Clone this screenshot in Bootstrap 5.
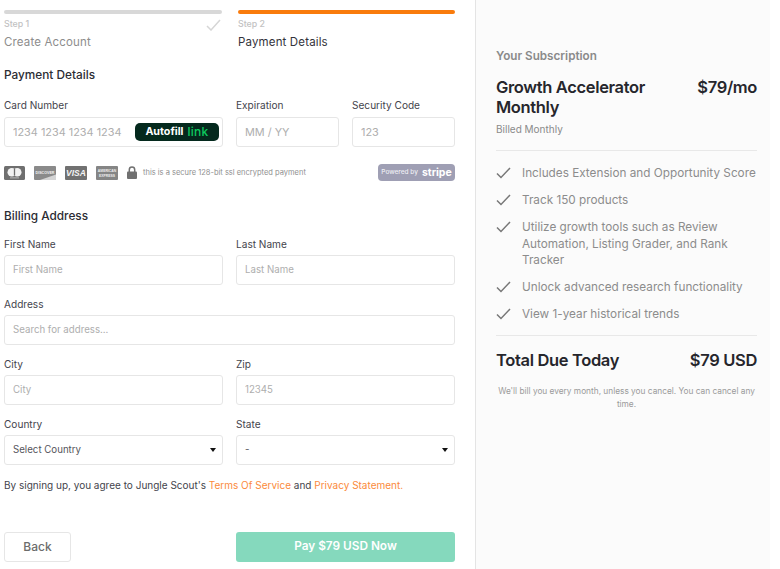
<!doctype html>
<html lang="en"><head><meta charset="utf-8">
<title>Checkout</title>
<link href="https://cdn.jsdelivr.net/npm/bootstrap@5.3.0/dist/css/bootstrap.min.css" rel="stylesheet">
<style>
html,body{height:100%;margin:0;background:#fff}
body{font-family:Inter,"Liberation Sans",sans-serif;color:#2c2c33;overflow:hidden}
.shell{height:569px;width:770px}
.leftpane{width:476px;padding:10px 20px 0 4px;border-right:1px solid #e4e4e4;height:569px;flex:none}
.rightpane{flex:1;background:#fbfbfb;padding:48px 13px 0 20px;height:569px}
.steps{display:grid;grid-template-columns:218px 217px;column-gap:16px}
.bar{height:4px;border-radius:2px;background:#d8d8d8}
.bar-on{background:#f97b0c}
.steplab{font-size:8.8px;line-height:12px;color:#c2c2c2;margin-top:4px;font-weight:500}
.stepname{font-size:11.5px;line-height:16px;margin-top:4px;color:#8d8d8d;letter-spacing:.15px}
.stepname-on{color:#33333b}
.stepcheck{position:absolute;right:1px;top:9px}
.sect{font-size:11.8px;font-weight:500;line-height:16px;color:#2c2c33}
.lab{font-size:10.1px;line-height:13px;margin-bottom:4px;color:#44444c;display:block}
.labcard{margin-bottom:5.5px}
.gridtwo{display:grid;grid-template-columns:219px 219px;column-gap:13px}
.gridcard{display:grid;grid-template-columns:219px 103px 103px;column-gap:13px}
.field.form-control,.field.form-select{height:30px;border:1px solid #e6e6e6;border-radius:3px;font-size:9.7px;line-height:14px;padding:0 8px;color:#55555c;background-color:#fff;box-shadow:none}
.field.cardfield.form-control{font-size:10.9px}
.field::placeholder{color:#aeaeae;opacity:1}
.field.form-select{background-image:none;color:#55555c}
.selwrap::after{content:"";position:absolute;right:7px;top:13px;border-left:3px solid transparent;border-right:3px solid transparent;border-top:4px solid #111;pointer-events:none}
.autofill{position:absolute;right:4px;top:6px;height:18px;width:84px;background:#04291d;border-radius:5px;color:#fff;font-size:10.7px;font-weight:700;display:flex;align-items:center;justify-content:center;gap:4px}
.autofill em{font-style:normal;color:#0dc95f;font-weight:500;font-size:12px;letter-spacing:.3px}
.secure{font-size:7.5px;color:#8f8f8f;line-height:12px}
.stripe{width:77px;height:17px;background:#9f9fb4;border-radius:4px;color:#eeeef3;font-size:6.5px;display:flex;align-items:center;justify-content:center;gap:4px;font-weight:500}
.stripe b{font-size:10.5px;font-weight:700;line-height:14px;color:#fff}
.agree{font-size:10px;line-height:14px;color:#44444c}
.agree a{color:#fb8a3c;text-decoration:none}
.btn.backbtn{width:67px;height:30px;padding:0;font-size:12px;font-weight:500;color:#6c6c6c;background:#fff;border:1px solid #e6e6e6;border-radius:3px}
.btn.paybtn{width:219px;height:30px;padding:0;font-size:11.8px;font-weight:600;color:#fff;background:#85d9bd;border:0;border-radius:3px}
.subhead{font-size:11.7px;font-weight:600;color:#8a8a8a;line-height:16px}
.plan{font-size:16.5px;font-weight:600;line-height:20px;color:#26262c;letter-spacing:-.35px}
.billed{font-size:10px;line-height:12px;color:#8a8a8a}
.rule{height:1px;background:#e8e8e8}
.feat{display:flex;gap:11px;font-size:11.75px;line-height:16.6px;color:#8c8c8c;margin-bottom:10.4px}
.feat svg{flex:none;margin-top:2px}
.legal{font-size:8.3px;line-height:13px;color:#9a9a9a;text-align:center}
.cardicons{margin-top:17px;height:17px}
.cardicons svg text{font-family:"Liberation Sans",sans-serif}
</style></head>
<body>
<div class="shell d-flex">
<main class="leftpane">
 <div class="steps">
  <div class="position-relative"><div class="bar"></div><div class="steplab">Step 1</div><div class="stepname">Create Account</div>
   <svg class="stepcheck" width="15" height="12" viewBox="0 0 15 12" fill="none"><path d="M1 7l4 4 9-10" stroke="#d6d6d6" stroke-width="1.5"/></svg></div>
  <div><div class="bar bar-on"></div><div class="steplab">Step 2</div><div class="stepname stepname-on">Payment Details</div></div>
 </div>
 <div class="sect" style="margin-top:17px">Payment Details</div>
 <div class="gridcard" style="margin-top:15.5px">
  <div><label class="lab labcard">Card Number</label><div class="position-relative"><input class="form-control field cardfield" placeholder="1234 1234 1234 1234"><div class="autofill">Autofill <em>link</em></div></div></div>
  <div><label class="lab labcard">Expiration</label><input class="form-control field cardfield" placeholder="MM / YY"></div>
  <div><label class="lab labcard">Security Code</label><input class="form-control field cardfield" placeholder="123"></div>
 </div>
 <div class="d-flex align-items-center cardicons">
  <svg width="21" height="14" viewBox="0 0 21 14"><rect width="21" height="14" rx="1.5" fill="#6f6f6f"/><circle cx="7.800" cy="6.300" r="4.300" fill="#f2f2f2"/><circle cx="13.200" cy="6.300" r="4.300" fill="#f2f2f2"/><path d="M10.500 3v6.600" stroke="#6f6f6f" stroke-width="1.300"/><rect x="6" y="11.500" width="9" height=".8" fill="#ccc"/></svg>
  <svg style="margin-left:9px" width="22" height="14" viewBox="0 0 22 14"><rect width="22" height="14" rx="1" fill="#8a8a8a"/><path d="M6 14L22 8.500V14z" fill="#d4d4d4"/><text x="11" y="7.500" font-size="3.600" font-weight="700" fill="#f2f2f2" text-anchor="middle">DISCOVER</text></svg>
  <svg style="margin-left:9px" width="22" height="14" viewBox="0 0 22 14"><rect width="22" height="14" rx="1" fill="#717171"/><text x="11" y="10.300" font-size="8.500" font-weight="700" font-style="italic" fill="#f4f4f4" text-anchor="middle">VISA</text></svg>
  <svg style="margin-left:9px" width="22" height="14" viewBox="0 0 22 14"><rect width="22" height="14" rx="1" fill="#858585"/><text x="11" y="6" font-size="3.400" font-weight="700" fill="#eee" text-anchor="middle">AMERICAN</text><text x="11" y="10.500" font-size="3.400" font-weight="700" fill="#eee" text-anchor="middle">EXPRESS</text></svg>
  <svg style="margin-left:9px" width="10" height="13" viewBox="0 0 10 13"><path d="M2.300 6V3.700a2.700 2.700 0 0 1 5.400 0V6" fill="none" stroke="#707070" stroke-width="1.500"/><rect y="5.500" width="10" height="7.500" rx="1" fill="#707070"/></svg>
  <span class="secure" style="margin-left:6px">this is a secure 128-bit ssl encrypted payment</span>
  <span class="stripe ms-auto">Powered by <b>stripe</b></span>
 </div>
 <div class="sect" style="margin-top:27px">Billing Address</div>
 <div class="gridtwo" style="margin-top:13.5px">
  <div><label class="lab">First Name</label><input class="form-control field" placeholder="First Name"></div>
  <div><label class="lab">Last Name</label><input class="form-control field" placeholder="Last Name"></div>
 </div>
 <div style="margin-top:13px"><label class="lab">Address</label><input class="form-control field" placeholder="Search for address..."></div>
 <div class="gridtwo" style="margin-top:13px">
  <div><label class="lab">City</label><input class="form-control field" placeholder="City"></div>
  <div><label class="lab">Zip</label><input class="form-control field" placeholder="12345"></div>
 </div>
 <div class="gridtwo" style="margin-top:13px">
  <div><label class="lab">Country</label><div class="position-relative selwrap"><select class="form-select field"><option>Select Country</option></select></div></div>
  <div><label class="lab">State</label><div class="position-relative selwrap"><select class="form-select field"><option>-</option></select></div></div>
 </div>
 <p class="agree mb-0" style="margin-top:13.5px">By signing up, you agree to Jungle Scout's <a href="#">Terms Of Service</a> and <a href="#">Privacy Statement.</a></p>
 <div class="d-flex justify-content-between" style="margin-top:40px">
  <button class="btn backbtn">Back</button><button class="btn paybtn">Pay $79 USD Now</button>
 </div>
</main>
<aside class="rightpane">
 <div class="subhead">Your Subscription</div>
 <div class="d-flex justify-content-between" style="margin-top:13px">
  <div class="plan" style="width:160px">Growth Accelerator Monthly</div><div class="plan">$79/mo</div>
 </div>
 <div class="billed" style="margin-top:6px">Billed Monthly</div>
 <div class="rule" style="margin-top:15px;margin-bottom:14px"></div>
 <div class="feat"><svg width="15" height="12" viewBox="0 0 15 12" fill="none"><path d="M1 6.500L5 10.500 14 1" stroke="#777" stroke-width="1.500"/></svg><span>Includes Extension and Opportunity Score</span></div>
 <div class="feat"><svg width="15" height="12" viewBox="0 0 15 12" fill="none"><path d="M1 6.500L5 10.500 14 1" stroke="#777" stroke-width="1.500"/></svg><span>Track 150 products</span></div>
 <div class="feat"><svg width="15" height="12" viewBox="0 0 15 12" fill="none"><path d="M1 6.500L5 10.500 14 1" stroke="#777" stroke-width="1.500"/></svg><span>Utilize growth tools such as Review Automation, Listing Grader, and Rank Tracker</span></div>
 <div class="feat"><svg width="15" height="12" viewBox="0 0 15 12" fill="none"><path d="M1 6.500L5 10.500 14 1" stroke="#777" stroke-width="1.500"/></svg><span>Unlock advanced research functionality</span></div>
 <div class="feat"><svg width="15" height="12" viewBox="0 0 15 12" fill="none"><path d="M1 6.500L5 10.500 14 1" stroke="#777" stroke-width="1.500"/></svg><span>View 1-year historical trends</span></div>
 <div class="rule" style="margin-top:12px"></div>
 <div class="d-flex justify-content-between plan" style="margin-top:14px"><span>Total Due Today</span><span>$79 USD</span></div>
 <div class="legal" style="margin-top:15px">We'll bill you every month, unless you cancel. You can cancel any time.</div>
</aside>
</div>
<script src="https://cdn.jsdelivr.net/npm/bootstrap@5.3.0/dist/js/bootstrap.bundle.min.js"></script>
</body></html>
